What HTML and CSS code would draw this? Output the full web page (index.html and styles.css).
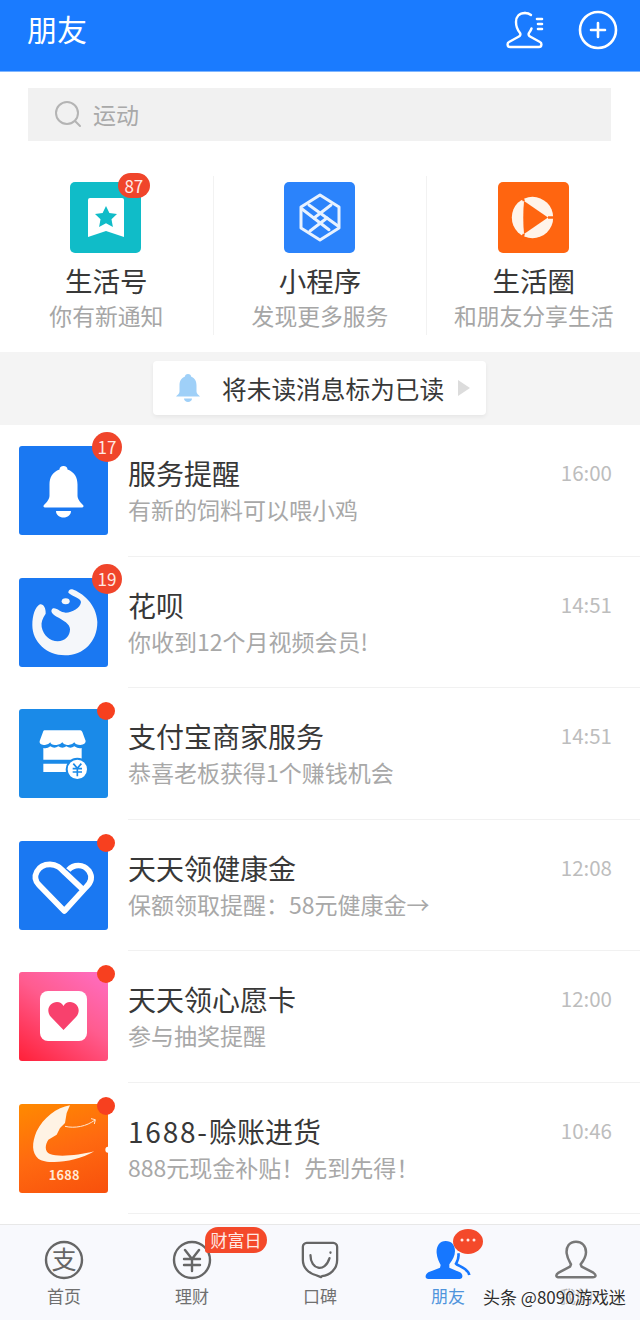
FILE: index.html
```html
<!DOCTYPE html>
<html lang="zh-CN">
<head>
  <meta charset="UTF-8" />
  <title>朋友</title>
  <link rel="stylesheet" href="styles.css">
</head>
<body>
  <header class="topbar">
    <h1>朋友</h1>
    <div class="topbar-actions">
      <svg width="42" height="38" viewBox="0 0 42 38" fill="none" stroke="#fff" stroke-width="2.400" stroke-linejoin="round" stroke-linecap="round">
        <path d="M19 2c-6 0-9 4-9 9 0 4 1.500 8 4 11 1 1.500 0 3-1.500 3.800L3 31c-2 1-2 5 1 5h29c3 0 3-4 1-5l-9.500-5.200c-1.500-.8-2.500-2.300-1.500-3.800 1.200-1.500 2-3 2.500-4.500"/>
        <path d="M19 2c2.500 0 4.500.8 6 2"/>
        <path d="M31 8h5M32 13h4M32 18h4" stroke-width="2.600"/>
      </svg>
      <svg width="40" height="40" viewBox="0 0 40 40" fill="none" stroke="#fff" stroke-width="2.600" stroke-linecap="round">
        <circle cx="20" cy="20" r="18"/>
        <path d="M20 13v14M13 20h14"/>
      </svg>
    </div>
  </header>

  <div class="search">
    <svg width="28" height="28" viewBox="0 0 28 28" fill="none" stroke="#b4b4b4" stroke-width="2">
      <circle cx="13" cy="13" r="11"/>
      <path d="M21 21l5 5" stroke-linecap="round"/>
    </svg>
    <span>运动</span>
  </div>

  <section class="shortcuts">
    <div class="shortcut">
      <div class="shortcut-icon teal">
        <svg width="71" height="71" viewBox="0 0 71 71">
          <path d="M18 18a2 2 0 0 1 2-2h32a2 2 0 0 1 2 2v37l-18-6-18 6z" fill="#fff"/>
          <path d="M36 24l3.400 7 7.600 1-5.500 5.300 1.400 7.700-6.900-3.700-6.900 3.700 1.400-7.700-5.500-5.300 7.600-1z" fill="#10bcc8"/>
        </svg>
        <span class="count count-top">87</span>
      </div>
      <strong>生活号</strong>
      <small>你有新通知</small>
    </div>
    <div class="shortcut">
      <div class="shortcut-icon blue">
        <svg width="71" height="71" viewBox="0 0 71 71" fill="none" stroke="#e8f2ff" stroke-width="3" stroke-linejoin="round" stroke-linecap="round">
          <path d="M36 13l19 12v21L36 58 17 46V25z"/>
          <path d="M25 23l29 21M18 27l27 20.700"/>
          <path d="M30 36l17-13M26 49l17-13"/>
        </svg>
      </div>
      <strong>小程序</strong>
      <small>发现更多服务</small>
    </div>
    <div class="shortcut">
      <div class="shortcut-icon orange">
        <svg width="71" height="71" viewBox="0 0 71 71">
          <circle cx="34.500" cy="35.500" r="20.700" fill="#fff4ea"/>
          <path d="M26 19l24 16.500L26 52c-1-11-1-22 0-33z" fill="#ff6510"/>
          <path d="M26 19l-4-7M26 52l-4 7M50 35.500h8" stroke="#ff6510" stroke-width="2.400"/>
        </svg>
      </div>
      <strong>生活圈</strong>
      <small>和朋友分享生活</small>
    </div>
  </section>

  <div class="read-band">
    <div class="read-button">
      <svg width="26" height="30" viewBox="0 0 26 30" fill="#9fd0f8">
        <path d="M13 1c2 0 3 1 3 2.500 4 1.500 5.500 5 5.500 9v6c0 2 2 3.500 3.500 5H1c1.500-1.500 3.500-3 3.500-5v-6c0-4 1.500-7.500 5.500-9C10 2 11 1 13 1z"/>
        <path d="M9 25.500h8c0 2-2 3.500-4 3.500s-4-1.500-4-3.500z"/>
      </svg>
      <span>将未读消息标为已读</span>
      <i class="caret"></i>
    </div>
  </div>

  <main class="list">
    <article class="row">
      <div class="avatar blue-square">
        <svg width="89" height="89" viewBox="0 0 89 89" fill="#fff">
          <path d="M44.500 20c2.500 0 4 1.500 4 3.500 7 2.500 10 8 10 15v11c0 4 3 7 5.500 9.500 1 1 .5 2.500-1 2.500H26c-1.500 0-2-1.500-1-2.500 2.500-2.500 5.500-5.500 5.500-9.500v-11c0-7 3-12.500 10-15 0-2 1.500-3.500 4-3.500z"/>
          <path d="M37 65h15c0 4-3.500 6.500-7.500 6.500S37 69 37 65z"/>
        </svg>
        <span class="count">17</span>
      </div>
      <div class="row-body">
        <div class="row-head"><h2>服务提醒</h2><time>16:00</time></div>
        <p>有新的饲料可以喂小鸡</p>
      </div>
    </article>

    <article class="row">
      <div class="avatar blue-square">
        <svg width="89" height="89" viewBox="12 18 267 267" fill="#f5f7fa">
          <path d="M172 52C200 62 245 95 247 150C247 210 205 250 150 250C95 250 52 210 52 160C52 130 60 105 75 97C85 95 93 108 92 125C82 140 78 150 80 165C85 190 105 208 128 208C150 208 165 192 165 172C165 155 145 145 125 134C112 127 105 117 112 110C125 105 135 122 152 122C172 122 196 108 198 90C196 76 172 74 160 62C160 55 165 50 172 52z"/>
          <ellipse cx="152" cy="88" rx="12" ry="9"/>
        </svg>
        <span class="count">19</span>
      </div>
      <div class="row-body">
        <div class="row-head"><h2>花呗</h2><time>14:51</time></div>
        <p>你收到12个月视频会员!</p>
      </div>
    </article>

    <article class="row">
      <div class="avatar sky-square">
        <svg width="89" height="89" viewBox="12 16 267 267" fill="#fff">
          <path d="M88 80H196Q200 80 202 85L212 112Q212 122 196 124Q182 124 178 116Q170 126 156 124Q146 124 142 116Q134 126 120 124Q108 124 106 116Q98 126 86 124Q72 122 74 112L84 85Q85 80 88 80z"/>
          <path d="M85 133Q96 136 106 128Q118 136 130 128Q142 136 154 128Q166 136 178 128Q190 136 200 133V168H85zM85 180H158V205H85z"/>
          <circle cx="187" cy="197" r="32" fill="#fff" stroke="#1a8ae8" stroke-width="6"/>
          <path d="M175 180l12 14 12-14M173 195h28M173 205h28M187 194v24" fill="none" stroke="#1a8ae8" stroke-width="5"/>
        </svg>
        <span class="dot"></span>
      </div>
      <div class="row-body">
        <div class="row-head"><h2>支付宝商家服务</h2><time>14:51</time></div>
        <p>恭喜老板获得1个赚钱机会</p>
      </div>
    </article>

    <article class="row">
      <div class="avatar blue-square">
        <svg width="89" height="89" viewBox="12 18 267 267" fill="none" stroke="#fff" stroke-width="17" stroke-linejoin="round">
          <path d="M200 160L150 113C135 98 125 88 105 88C68 88 48 125 72 150L148 228L212 158C225 146 235 128 222 108C205 85 175 88 160 105"/>
        </svg>
        <span class="dot"></span>
      </div>
      <div class="row-body">
        <div class="row-head"><h2>天天领健康金</h2><time>12:08</time></div>
        <p>保额领取提醒：58元健康金→</p>
      </div>
    </article>

    <article class="row">
      <div class="avatar pink-square">
        <svg width="89" height="89" viewBox="0 0 89 89">
          <rect x="21" y="19" width="47" height="50" rx="8" fill="#fff"/>
          <path d="M44.500 58L32 45c-6-7-1-15 6-15 3 0 5 1.500 6.500 4 1.500-2.500 3.500-4 6.500-4 7 0 12 8 6 15z" fill="#f8416d"/>
        </svg>
        <span class="dot"></span>
      </div>
      <div class="row-body">
        <div class="row-head"><h2>天天领心愿卡</h2><time>12:00</time></div>
        <p>参与抽奖提醒</p>
      </div>
    </article>

    <article class="row">
      <div class="avatar orange-square">
        <svg width="89" height="89" viewBox="12 18 267 267">
          <path d="M165 22C125 28 85 60 65 100C50 135 50 165 70 182C95 200 180 195 238 160C190 172 130 178 105 168C88 160 90 140 100 125L125 110L135 90L150 75L155 45z" fill="#fff3e4"/>
          <path d="M150 85C180 92 215 85 240 66M228 62l13 3-3 13" fill="none" stroke="#ffe6cf" stroke-width="3"/>
          <circle cx="280" cy="155" r="9" fill="#fff"/>
          <text x="148" y="245" class="brand-text">1688</text>
        </svg>
        <span class="dot"></span>
      </div>
      <div class="row-body">
        <div class="row-head"><h2><span class="wide">1688-</span>赊账进货</h2><time>10:46</time></div>
        <p>888元现金补贴！先到先得！</p>
      </div>
    </article>
  </main>

  <nav class="tabbar">
    <div class="tab">
      <svg width="40" height="40" viewBox="0 0 40 40" fill="none" stroke="#666" stroke-width="2.400">
        <circle cx="20" cy="20" r="18"/>
        <text x="20" y="29" class="tab-glyph">支</text>
      </svg>
      <span>首页</span>
    </div>
    <div class="tab">
      <svg width="40" height="40" viewBox="0 0 40 40" fill="none" stroke="#666" stroke-width="2.400">
        <circle cx="20" cy="20" r="18"/>
        <path d="M13 10l7 9 7-9M12 19h16M12 25h16M20 19v12" stroke-linecap="round"/>
      </svg>
      <span>理财</span>
      <b class="tab-tag">财富日</b>
    </div>
    <div class="tab">
      <svg width="40" height="40" viewBox="-1 -1 42 42" fill="none" stroke="#666" stroke-width="2.400" stroke-linecap="round" stroke-linejoin="round">
        <path d="M6 2h28c2 0 4 2 4 4v14c0 10-8 16-16 17l-1 1-5-2C8 34 2 28 2 20V6c0-2 2-4 4-4z"/>
        <path d="M10 15c0 15 15 19 20 3"/>
        <path d="M31 12v.500"/>
      </svg>
      <span>口碑</span>
    </div>
    <div class="tab tab-active">
      <svg width="48" height="40" viewBox="72 45 144 120">
        <path d="M137 48C118 48 108 65 110 85C111 100 118 112 122 120L120 128L85 142C75 148 73 162 85 162H178C190 162 190 148 180 142L148 128L148 118C158 105 165 92 165 78C165 60 155 48 137 48z" fill="#1677ff"/>
        <path d="M175 85C178 100 172 108 168 116C172 122 205 130 208 150" fill="none" stroke="#1677ff" stroke-width="8"/>
      </svg>
      <span>朋友</span>
      <div class="tab-more">
        <svg width="30" height="25" viewBox="0 0 30 25" fill="#ffe9e4">
          <circle cx="9" cy="11" r="1.500"/>
          <circle cx="15" cy="11" r="1.500"/>
          <circle cx="21" cy="11" r="1.500"/>
        </svg>
      </div>
    </div>
    <div class="tab">
      <svg width="42" height="40" viewBox="465 45 126 120" fill="none" stroke="#777" stroke-width="7.500" stroke-linejoin="round">
        <path d="M528 50C508 50 498 65 500 85C502 100 510 112 513 118L510 125L476 143C465 150 468 157 478 157H578C588 157 590 150 580 143L545 125L542 118C550 108 558 95 558 82C558 62 545 50 528 50z"/>
      </svg>
      <span class="tab-faint">我的</span>
    </div>
    <div class="watermark">头条 @8090游戏迷</div>
  </nav>
</body>
</html>
```

FILE: styles.css
```css
* { box-sizing: border-box; }
body {
  margin: 0;
  width: 640px;
  height: 1320px;
  display: flex;
  flex-direction: column;
  font-family: "Noto Sans CJK SC", "Noto Sans", sans-serif;
  background-color: #ffffff;
  color: #333333;
  overflow: hidden;
}
h1, h2, p { margin: 0; font-weight: normal; }

.topbar {
  height: 72px;
  flex: none;
  display: flex;
  align-items: center;
  justify-content: space-between;
  padding: 0 22px 0 27px;
  background-color: #1a7bff;
  border-bottom: 1px solid #7fb6ff;
  color: #ffffff;
}
.topbar h1 { font-size: 30px; line-height: 40px; margin-top: -15px; }
.topbar-actions { display: flex; align-items: center; gap: 30px; margin-top: -12px; }

.search {
  flex: none;
  height: 53px;
  margin: 16px 29px 0 28px;
  padding-left: 26px;
  padding-bottom: 2px;
  display: flex;
  align-items: center;
  gap: 11px;
  background-color: #f1f1f1;
  color: #a9a9a9;
  font-size: 23px;
}

.shortcuts {
  flex: none;
  display: flex;
  height: 159px;
  margin: 35px 0 17px;
}
.shortcut {
  flex: 1;
  display: flex;
  flex-direction: column;
  align-items: center;
  padding-top: 6px;
  border-right: 1px solid #f2f2f2;
}
.shortcut:last-child { border-right: none; }
.shortcut strong { font-size: 27.500px; font-weight: normal; line-height: 36px; margin-top: 9px; color: #383838; }
.shortcut small { font-size: 22.800px; line-height: 32px; margin-top: 2px; color: #a6a6a6; white-space: nowrap; }
.shortcut:not(:last-child) .shortcut-icon { margin-left: -2px; }
.shortcut-icon { position: relative; width: 71px; height: 71px; border-radius: 5px; }
.shortcut-icon svg { display: block; }
.teal { background-color: #10bcc8; }
.blue { background-color: #2b83fb; }
.orange { background-color: #ff6510; }

.count {
  position: absolute;
  top: -14px;
  right: -14px;
  min-width: 30px;
  height: 30px;
  border-radius: 15px;
  background-color: #f0452b;
  color: #ffe9e4;
  font-size: 17px;
  line-height: 30px;
  text-align: center;
}
.count-top { top: -9px; right: -9px; min-width: 32px; height: 25px; line-height: 25px; }
.dot {
  position: absolute;
  top: -7px;
  right: -7px;
  width: 18px;
  height: 18px;
  border-radius: 50%;
  background-color: #f7401f;
}

.read-band {
  flex: none;
  height: 73px;
  padding-top: 9px;
  display: flex;
  justify-content: center;
  background-color: #f4f4f4;
}
.read-button {
  width: 333px;
  height: 54px;
  margin-left: -1px;
  padding-left: 22px;
  display: flex;
  align-items: center;
  background-color: #ffffff;
  border-radius: 4px;
  box-shadow: 0 2px 4px rgba(0, 0, 0, 0.06);
  font-size: 24.700px;
  color: #383838;
  white-space: nowrap;
}
.read-button span { margin-left: 21px; }
.caret {
  margin-left: 14px;
  border-left: 12px solid #dcdcdc;
  border-top: 8px solid transparent;
  border-bottom: 8px solid transparent;
}

.list { flex: 1; }
.row { height: 131.500px; padding-left: 19px; display: flex; align-items: center; }
.avatar { position: relative; width: 89px; height: 89px; flex: none; border-radius: 3px; overflow: visible; }
.avatar svg { display: block; }
.blue-square { background-color: #1a78f2; }
.sky-square { background-color: #1a8ae8; }
.pink-square { background: linear-gradient(215deg, #ff6ec4 0%, #ff5c8f 45%, #ff2038 100%); }
.orange-square { background: linear-gradient(160deg, #ff8a00 0%, #ff6a10 50%, #f8500c 100%); }
.brand-text { fill: #ffe9d6; font-size: 38px; font-weight: bold; text-anchor: middle; letter-spacing: 1px; }

.row-body {
  flex: 1;
  align-self: stretch;
  margin-left: 20px;
  padding: 30px 28px 0 0;
  border-bottom: 1px solid #f1f1f1;
}
.row-head { display: flex; justify-content: space-between; align-items: center; height: 36px; }
.row-head h2 { font-size: 28px; line-height: 36px; color: #383838; }
.wide { letter-spacing: 1.800px; }
.row-head time { font-size: 20.500px; color: #bdbdbd; margin-top: -2px; }
.row-body p { margin-top: 1px; font-size: 23px; line-height: 34px; color: #a8a8a8; white-space: nowrap; }

.tabbar {
  position: relative;
  flex: none;
  height: 96px;
  display: flex;
  background-color: #f8f9fd;
  border-top: 1px solid #e8e8e8;
}
.tab {
  position: relative;
  flex: 1;
  display: flex;
  flex-direction: column;
  align-items: center;
  padding-top: 15px;
  font-size: 17px;
  color: #707070;
}
.tab span { line-height: 26px; margin-top: 3px; }
.tab-glyph { fill: #666666; stroke: none; font-size: 25px; text-anchor: middle; }
.tab-active { color: #4f94dc; }
.tab-faint { color: #b0b0b0; }
.tab-tag {
  position: absolute;
  top: 2px;
  left: 77px;
  width: 62px;
  height: 26px;
  border-radius: 13px 13px 13px 3px;
  background-color: #f4492a;
  color: #ffe9e4;
  font-size: 17px;
  font-weight: normal;
  line-height: 26px;
  text-align: center;
}
.tab-more {
  position: absolute;
  top: 4px;
  left: 69px;
  width: 30px;
  height: 25px;
  border-radius: 50%;
  background-color: #f4492a;
}
.tab-more svg { display: block; }
.watermark {
  position: absolute;
  left: 483px;
  top: 60px;
  font-size: 17px;
  line-height: 24px;
  color: #2e2e2e;
  white-space: nowrap;
  text-shadow: 0 0 2px #ffffff, 0 0 2px #ffffff;
}
```
